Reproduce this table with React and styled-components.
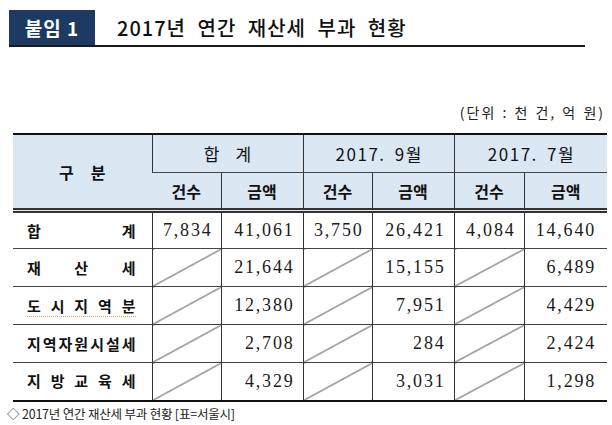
import React from 'react';
import styled, { createGlobalStyle, css } from 'styled-components';

const GlobalStyle = createGlobalStyle`
  html, body {
    margin: 0;
    padding: 0;
    background: #ffffff;
  }
  body {
    font-family: "Noto Sans CJK KR", "Noto Sans", sans-serif;
    color: #111;
  }
`;

const sans = `"Noto Sans CJK KR", "Noto Sans", sans-serif`;
const serif = `"Liberation Serif", "DejaVu Serif", serif`;

const columns = [139, 69, 82, 69, 82, 70, 83];

const rows = [
  { label: '합계', values: ['7,834', '41,061', '3,750', '26,421', '4,084', '14,640'] },
  { label: '재산세', values: [null, '21,644', null, '15,155', null, '6,489'] },
  { label: '도시지역분', marked: true, values: [null, '12,380', null, '7,951', null, '4,429'] },
  { label: '지역자원시설세', values: [null, '2,708', null, '284', null, '2,424'] },
  { label: '지방교육세', values: [null, '4,329', null, '3,031', null, '1,298'] },
];

const Page = styled.div`
  width: 612px;
  height: 425px;
  padding-top: 10px;
  box-sizing: border-box;
  overflow: hidden;
`;

const TitleBar = styled.div`
  display: flex;
  align-items: stretch;
  width: 576px;
  margin-left: 9px;
  border-bottom: 2px solid #1a1a1a;
`;

const Badge = styled.div`
  width: 86px;
  height: 35px;
  background: #1d3b62;
  color: #ffffff;
  font-family: ${sans};
  font-weight: 700;
  font-size: 19px;
  letter-spacing: 1px;
  display: flex;
  align-items: center;
  justify-content: center;
`;

const Title = styled.h1`
  margin: 0;
  padding-left: 22px;
  display: flex;
  align-items: center;
  font-family: ${sans};
  font-weight: 500;
  font-size: 20px;
  letter-spacing: 1px;
  word-spacing: 6px;
  color: #111;
`;

const Unit = styled.div`
  margin-top: 57px;
  padding-right: 7px;
  text-align: right;
  font-family: ${sans};
  font-size: 14px;
  line-height: 17px;
  letter-spacing: 2px;
  word-spacing: 1px;
  color: #222;
`;

const Table = styled.table`
  margin-top: 12px;
  margin-left: 13px;
  width: 594px;
  border-collapse: collapse;
  table-layout: fixed;
  border-top: 2px solid #111;
  border-bottom: 2px solid #111;
`;

const HeadCell = styled.th`
  background: #dce7f4;
  border-left: 1px solid #333;
  border-bottom: ${p => (p.$last ? '5px double #333' : '1px solid #444')};
  font-family: ${sans};
  font-size: ${p => (p.$bold ? '16px' : '17px')};
  font-weight: ${p => (p.$bold ? 700 : 400)};
  color: #111;
  text-align: center;
  padding: 0;
  height: ${p => p.$h || 'auto'};
  &:first-child {
    border-left: none;
  }
`;

const Spaced = styled.span`
  letter-spacing: ${p => p.$gap}px;
  word-spacing: ${p => p.$word || 0}px;
  padding-left: ${p => p.$gap}px;
`;

const BodyRow = styled.tr`
  height: 38px;
  & + & td {
    border-top: 1px solid #444;
  }
`;

const LabelCell = styled.td`
  padding: 0 16px 0 14px;
  font-family: ${sans};
  font-weight: 700;
  font-size: 15px;
  color: #111;
`;

const Label = styled.div`
  display: flex;
  justify-content: space-between;
  padding-bottom: 1px;
  ${p =>
    p.$marked &&
    css`
      border-bottom: 1.5px dotted #e3a55c;
      padding-bottom: 0;
      margin-bottom: -1px;
    `}
`;

const NumCell = styled.td`
  border-left: 1px solid #333;
  padding: 0 ${p => (p.$last ? 11 : 8)}px 0 0;
  text-align: right;
  font-family: ${serif};
  font-size: 18px;
  letter-spacing: 1.8px;
  color: #1a1a1a;
  ${p =>
    p.$slashed &&
    css`
      background: linear-gradient(
        to bottom right,
        transparent calc(50% - 0.8px),
        #333 50%,
        transparent calc(50% + 0.8px)
      );
    `}
`;

const Caption = styled.div`
  margin-top: 3px;
  padding-left: 7px;
  font-family: ${sans};
  font-size: 12.5px;
  line-height: 18px;
  letter-spacing: -0.2px;
  color: #222;
`;

const Distributed = ({ text, marked }) => (
  <Label $marked={marked}>
    {text.split('').map((ch, i) => (
      <span key={i}>{ch}</span>
    ))}
  </Label>
);

export default function App() {
  return (
    <Page>
      <GlobalStyle />
      <TitleBar>
        <Badge>붙임 1</Badge>
        <Title>2017년 연간 재산세 부과 현황</Title>
      </TitleBar>

      <Unit>(단위 : 천 건, 억 원)</Unit>

      <Table>
        <colgroup>
          {columns.map((w, i) => (
            <col key={i} style={{ width: w }} />
          ))}
        </colgroup>
        <thead>
          <tr>
            <HeadCell rowSpan={2} $bold $last>
              <Spaced $gap={17}>구분</Spaced>
            </HeadCell>
            <HeadCell colSpan={2} $h="37px">
              <Spaced $gap={16}>합계</Spaced>
            </HeadCell>
            <HeadCell colSpan={2}>
              <Spaced $gap={1.5} $word={4}>2017. 9월</Spaced>
            </HeadCell>
            <HeadCell colSpan={2}>
              <Spaced $gap={1.5} $word={4}>2017. 7월</Spaced>
            </HeadCell>
          </tr>
          <tr>
            {['건수', '금액', '건수', '금액', '건수', '금액'].map((t, i) => (
              <HeadCell key={i} $bold $last $h="35px">
                {t}
              </HeadCell>
            ))}
          </tr>
        </thead>
        <tbody>
          {rows.map(row => (
            <BodyRow key={row.label}>
              <LabelCell>
                <Distributed text={row.label} marked={row.marked} />
              </LabelCell>
              {row.values.map((v, i) => (
                <NumCell key={i} $slashed={v === null} $last={i === 5}>
                  {v}
                </NumCell>
              ))}
            </BodyRow>
          ))}
        </tbody>
      </Table>

      <Caption>◇ 2017년 연간 재산세 부과 현황 [표=서울시]</Caption>
    </Page>
  );
}
